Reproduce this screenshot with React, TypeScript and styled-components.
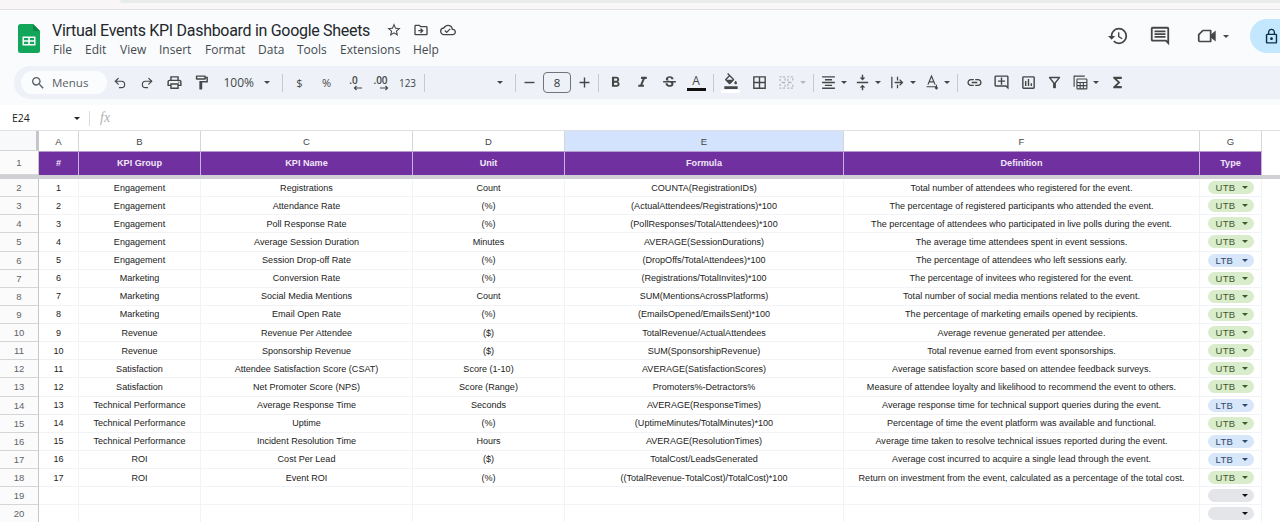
import React from "react";
import styled, { createGlobalStyle } from "styled-components";
import { Undo2, Redo2 } from "lucide-react";
import {
  MdOutlinePrint,
  MdOutlineFormatPaint,
  MdSearch,
  MdFormatBold,
  MdFormatItalic,
  MdStrikethroughS,
  MdBorderAll,
  MdFormatAlignCenter,
  MdVerticalAlignCenter,
  MdLink,
  MdOutlineAddComment,
  MdOutlineInsertChart,
  MdOutlineFilterAlt,
  MdFunctions,
  MdHistory,
  MdOutlineComment,
  MdLockOutline,
  MdStarBorder,
  MdOutlineDriveFileMove,
  MdOutlineCloudDone,
  MdAdd,
  MdRemove,
  MdFormatColorFill,
} from "react-icons/md";

type KpiType = "UTB" | "LTB" | "";

const COLUMNS = [
  { key: "A", width: 40 },
  { key: "B", width: 122 },
  { key: "C", width: 212 },
  { key: "D", width: 152 },
  { key: "E", width: 279 },
  { key: "F", width: 356 },
  { key: "G", width: 62 },
];

const HEADINGS = ["#", "KPI Group", "KPI Name", "Unit", "Formula", "Definition", "Type"];

const KPIS: [string, string, string, string, string, KpiType][] = [
  ["Engagement", "Registrations", "Count", "COUNTA(RegistrationIDs)", "Total number of attendees who registered for the event.", "UTB"],
  ["Engagement", "Attendance Rate", "(%)", "(ActualAttendees/Registrations)*100", "The percentage of registered participants who attended the event.", "UTB"],
  ["Engagement", "Poll Response Rate", "(%)", "(PollResponses/TotalAttendees)*100", "The percentage of attendees who participated in live polls during the event.", "UTB"],
  ["Engagement", "Average Session Duration", "Minutes", "AVERAGE(SessionDurations)", "The average time attendees spent in event sessions.", "UTB"],
  ["Engagement", "Session Drop-off Rate", "(%)", "(DropOffs/TotalAttendees)*100", "The percentage of attendees who left sessions early.", "LTB"],
  ["Marketing", "Conversion Rate", "(%)", "(Registrations/TotalInvites)*100", "The percentage of invitees who registered for the event.", "UTB"],
  ["Marketing", "Social Media Mentions", "Count", "SUM(MentionsAcrossPlatforms)", "Total number of social media mentions related to the event.", "UTB"],
  ["Marketing", "Email Open Rate", "(%)", "(EmailsOpened/EmailsSent)*100", "The percentage of marketing emails opened by recipients.", "UTB"],
  ["Revenue", "Revenue Per Attendee", "($)", "TotalRevenue/ActualAttendees", "Average revenue generated per attendee.", "UTB"],
  ["Revenue", "Sponsorship Revenue", "($)", "SUM(SponsorshipRevenue)", "Total revenue earned from event sponsorships.", "UTB"],
  ["Satisfaction", "Attendee Satisfaction Score (CSAT)", "Score (1-10)", "AVERAGE(SatisfactionScores)", "Average satisfaction score based on attendee feedback surveys.", "UTB"],
  ["Satisfaction", "Net Promoter Score (NPS)", "Score (Range)", "Promoters%-Detractors%", "Measure of attendee loyalty and likelihood to recommend the event to others.", "UTB"],
  ["Technical Performance", "Average Response Time", "Seconds", "AVERAGE(ResponseTimes)", "Average response time for technical support queries during the event.", "LTB"],
  ["Technical Performance", "Uptime", "(%)", "(UptimeMinutes/TotalMinutes)*100", "Percentage of time the event platform was available and functional.", "UTB"],
  ["Technical Performance", "Incident Resolution Time", "Hours", "AVERAGE(ResolutionTimes)", "Average time taken to resolve technical issues reported during the event.", "LTB"],
  ["ROI", "Cost Per Lead", "($)", "TotalCost/LeadsGenerated", "Average cost incurred to acquire a single lead through the event.", "LTB"],
  ["ROI", "Event ROI", "(%)", "((TotalRevenue-TotalCost)/TotalCost)*100", "Return on investment from the event, calculated as a percentage of the total cost.", "UTB"],
];

const MENUS = [
  { label: "File", width: 32 },
  { label: "Edit", width: 35 },
  { label: "View", width: 39 },
  { label: "Insert", width: 46 },
  { label: "Format", width: 53 },
  { label: "Data", width: 39 },
  { label: "Tools", width: 43 },
  { label: "Extensions", width: 73 },
  { label: "Help", width: 32 },
];

const GlobalStyle = createGlobalStyle`
  html, body {
    margin: 0;
    padding: 0;
    height: 522px;
    overflow: hidden;
    background: #fff;
  }
  * { box-sizing: border-box; }
`;

const Page = styled.div`
  width: 1280px;
  height: 522px;
  overflow: hidden;
  display: flex;
  flex-direction: column;
  font-family: "Liberation Sans", Arial, sans-serif;
  background: #f9fbfd;
  > * {
    flex-shrink: 0;
  }
`;

const BrowserEdge = styled.div`
  height: 10px;
  background: #f8f6f6;
  border-bottom: 1px solid #e2dfe2;
`;

const AddressBarEdge = styled.div`
  height: 3px;
  margin-left: 120px;
  background: #e8ecec;
  border-bottom-left-radius: 8px;
`;

const Header = styled.header`
  height: 56px;
  display: flex;
  align-items: flex-start;
  padding-left: 18px;
`;

const Logo = styled.svg`
  width: 22px;
  height: 29px;
  margin-top: 14px;
  flex: none;
`;

const TitleBlock = styled.div`
  margin-left: 12px;
  padding-top: 10px;
  flex: 1;
`;

const TitleRow = styled.div`
  display: flex;
  align-items: center;
  height: 20px;
`;

const Title = styled.div`
  font-family: Roboto, sans-serif;
  font-size: 16px;
  letter-spacing: -0.3px;
  width: 328px;
  white-space: nowrap;
  color: #23272b;
`;

const TitleIcon = styled.span`
  width: 27px;
  display: flex;
  justify-content: center;
  color: #444746;
  font-size: 16px;
`;

const MenuRow = styled.nav`
  display: flex;
  margin-top: 1px;
  margin-left: 1px;
`;

const MenuItem = styled.div<{ $w: number }>`
  width: ${(p) => p.$w}px;
  font-family: "Open Sans", sans-serif;
  font-size: 12px;
  line-height: 17px;
  color: #444a4f;
`;

const HeaderActions = styled.div`
  display: flex;
  align-items: center;
  height: 34px;
  margin-top: 9px;
  color: #444746;
`;

const ActionIcon = styled.span`
  width: 42px;
  display: flex;
  align-items: center;
  justify-content: center;
  font-size: 22px;
`;

const VideoAction = styled.span`
  width: 69px;
  padding-left: 15px;
  display: flex;
  align-items: center;
  gap: 5px;
`;

const LockPill = styled.div`
  width: 30px;
  height: 34px;
  background: #c2e7ff;
  border-radius: 17px 0 0 17px;
  display: flex;
  align-items: center;
  padding-left: 13px;
  font-size: 17px;
  color: #0b2f4a;
`;

const Toolbar = styled.div`
  height: 33px;
  margin-left: 14px;
  padding-left: 7px;
  display: flex;
  align-items: center;
  background: #eef2f8;
  border-radius: 16px 0 0 16px;
  color: #444746;
`;

const SearchPill = styled.div`
  width: 85.5px;
  height: 23px;
  border-radius: 12px;
  background: #fbfcfe;
  display: flex;
  align-items: center;
  gap: 6px;
  padding-left: 9px;
  font-family: "Open Sans", sans-serif;
  font-size: 11.5px;
  color: #5a5f63;
  flex: none;
`;

const Slot = styled.div<{ $w?: number; $dim?: boolean; $gap?: number }>`
  width: ${(p) => p.$w ?? 27}px;
  height: 24px;
  flex: none;
  display: flex;
  align-items: center;
  justify-content: center;
  gap: ${(p) => p.$gap ?? 4}px;
  font-size: 17px;
  color: ${(p) => (p.$dim ? "#b4b8bb" : "#444746")};
`;

const FontFamilySlot = styled(Slot)`
  justify-content: flex-end;
  padding-right: 9px;
`;

const SlotText = styled.span<{ $size?: number }>`
  font-family: "Open Sans", sans-serif;
  font-size: ${(p) => p.$size ?? 11}px;
  color: #444746;
`;

const Separator = styled.div`
  width: 7px;
  height: 18px;
  flex: none;
  display: flex;
  justify-content: center;
  &::before {
    content: "";
    width: 1px;
    background: #c7cbd0;
  }
`;

const Caret = styled.i<{ $dark?: boolean; $dim?: boolean }>`
  width: 0;
  height: 0;
  flex: none;
  border-left: 3.5px solid transparent;
  border-right: 3.5px solid transparent;
  border-top: 3.5px solid ${(p) => (p.$dim ? "#b4b8bb" : p.$dark ? "#222" : "#444746")};
`;

const FontSizeBox = styled.div`
  width: 28px;
  height: 21px;
  flex: none;
  margin: 0 4px;
  border: 1px solid #70757a;
  border-radius: 4px;
  display: flex;
  align-items: center;
  justify-content: center;
  font-family: "Open Sans", sans-serif;
  font-size: 11.5px;
  color: #333;
`;

const ColorStack = styled.div`
  display: flex;
  flex-direction: column;
  align-items: center;
  width: 20px;
`;

const ColorLetter = styled.span`
  font-family: "Open Sans", sans-serif;
  font-size: 12px;
  line-height: 12px;
  color: #444746;
`;

const ColorBar = styled.span<{ $c: string }>`
  width: 19px;
  height: 3px;
  margin-top: 1px;
  background: ${(p) => p.$c};
`;

const FillStack = styled(ColorStack)`
  font-size: 16px;
  line-height: 0;
`;

const DecimalStack = styled.div`
  display: flex;
  flex-direction: column;
  align-items: center;
  font-family: "Open Sans", sans-serif;
  font-size: 10px;
  font-weight: 600;
  line-height: 10px;
  color: #444746;
  svg {
    display: block;
    margin-left: 7px;
  }
`;

const FormulaBar = styled.div`
  height: 25px;
  margin-top: 6px;
  padding: 1px 0 0 12px;
  background: #fff;
  display: flex;
  align-items: center;
`;

const CellRef = styled.div`
  width: 62px;
  font-family: "Open Sans", sans-serif;
  font-size: 10.5px;
  color: #222;
`;

const FormulaDivider = styled.div`
  width: 1px;
  height: 15px;
  margin-left: 9px;
  background: #dadce0;
`;

const FxLabel = styled.span`
  margin-left: 10px;
  font-family: "Liberation Serif", serif;
  font-style: italic;
  font-size: 14px;
  color: #b0b3b6;
`;

const Sheet = styled.section`
  background: #fff;
  border-top: 1px solid #dfe1e4;
`;

const Row = styled.div<{ $h: number }>`
  display: flex;
  height: ${(p) => p.$h}px;
`;

const RowHead = styled.div`
  width: 39px;
  flex: none;
  display: flex;
  align-items: center;
  justify-content: center;
  font-size: 9.5px;
  color: #5f6368;
  background: #fbfbfb;
  border-bottom: 1px solid #d4d6d8;
  border-right: 1px solid #c4c7ca;
`;

const Corner = styled(RowHead)`
  background: #f8f9fa;
  border-right: 3px solid #c4c6c9;
`;

const ColHead = styled.div<{ $w: number; $active?: boolean }>`
  width: ${(p) => p.$w}px;
  flex: none;
  display: flex;
  align-items: center;
  justify-content: center;
  font-size: 9.5px;
  color: #444;
  background: ${(p) => (p.$active ? "#d3e3fd" : "#fff")};
  border-right: 1px solid #d4d6d8;
`;

const HeadCell = styled.div<{ $w: number }>`
  width: ${(p) => p.$w}px;
  flex: none;
  display: flex;
  align-items: center;
  justify-content: center;
  padding-bottom: 2px;
  font-size: 9.1px;
  font-weight: 700;
  color: #f1e6f8;
  background: #7030a0;
  border-right: 1px solid #cdb1e2;
  border-top: 1px solid #b79ad0;
`;

const Cell = styled.div<{ $w: number }>`
  width: ${(p) => p.$w}px;
  flex: none;
  display: flex;
  align-items: center;
  justify-content: center;
  white-space: nowrap;
  font-size: 9.05px;
  color: #222;
  border-right: 1px solid #f1f3f6;
  border-bottom: 1px solid #f1f3f6;
`;

const FreezeBar = styled.div`
  height: 4px;
  background: #cfd0d3;
`;

const CHIP_COLORS: Record<string, { bg: string; fg: string }> = {
  UTB: { bg: "#d9eccb", fg: "#3c5a2c" },
  LTB: { bg: "#d8e6f9", fg: "#2f4a6b" },
  "": { bg: "#e3e5e8", fg: "#222" },
};

const Chip = styled.div<{ $t: KpiType }>`
  width: 46px;
  height: 13px;
  border-radius: 7px;
  display: flex;
  align-items: center;
  justify-content: space-between;
  padding: 0 6px 0 8px;
  font-size: 9.5px;
  letter-spacing: 0.3px;
  background: ${(p) => CHIP_COLORS[p.$t].bg};
  color: ${(p) => CHIP_COLORS[p.$t].fg};
`;

const ChipCaret = styled.i<{ $t: KpiType }>`
  width: 0;
  height: 0;
  margin-left: auto;
  border-left: 3px solid transparent;
  border-right: 3px solid transparent;
  border-top: 3px solid ${(p) => (p.$t === "" ? "#111" : CHIP_COLORS[p.$t].fg)};
`;

const glyph = {
  width: 17,
  height: 17,
  viewBox: "0 0 24 24",
  fill: "none",
  stroke: "currentColor",
  strokeWidth: 1.8,
};

const VideoIcon = () => (
  <svg width="22" height="22" viewBox="0 0 24 24" fill="none" stroke="currentColor" strokeWidth="1.9">
    <path d="M7.5 6H16v12H4a1 1 0 0 1-1-1v-6.5z" strokeLinejoin="round" />
    <path d="M16 10.5 21.5 6v12L16 13.5z" fill="currentColor" stroke="none" />
  </svg>
);

const MergeIcon = () => (
  <svg {...glyph} strokeDasharray="3 2">
    <path d="M3 10V4h7v6M14 10V4h7v6M3 14v6h7v-6M14 14v6h7v-6" />
    <path d="M5 12h5M19 12h-5" strokeDasharray="none" />
  </svg>
);

const WrapIcon = () => (
  <svg {...glyph}>
    <path d="M4 4v16M8 12h11M15 8l4 4-4 4M12 4v5M12 15v5" />
  </svg>
);

const RotateIcon = () => (
  <svg {...glyph} strokeWidth={1.7}>
    <path d="M5 18h14M7 15l5-12 5 12M9 11h6M19 15v6M17 19l2 2 2-2" />
  </svg>
);

const FunctionTableIcon = () => (
  <svg {...glyph} strokeWidth={1.6}>
    <path d="M3 18V3h15" />
    <rect x="7" y="7" width="14" height="14" rx="1" />
    <path d="M7 12h14M7 16.5h14M11.5 12v9M16 12v9" />
  </svg>
);

const ShiftArrow = ({ left }: { left?: boolean }) => (
  <svg width="9" height="6" viewBox="0 0 9 6" fill="none" stroke="currentColor" strokeWidth="1.2">
    {left ? <path d="M9 3H1.5M3.5 1 1.5 3l2 2" /> : <path d="M0 3h7.5M5.5 1l2 2-2 2" />}
  </svg>
);

export default function App() {
  const rows = Array.from({ length: 19 }, (_, i) => KPIS[i] ?? null);

  return (
    <Page>
      <GlobalStyle />
      <BrowserEdge>
        <AddressBarEdge />
      </BrowserEdge>

      <Header>
        <Logo viewBox="0 0 22 29">
          <path d="M2.5 0H15l7 7v19.5a2.5 2.5 0 0 1-2.5 2.5h-17A2.5 2.5 0 0 1 0 26.5v-24A2.5 2.5 0 0 1 2.5 0z" fill="#11a65a" />
          <path d="M15 0l7 7h-5a2 2 0 0 1-2-2z" fill="#0c8445" />
          <path d="M4.5 12.5h13v9h-13z M6 14v2.3h4.2V14z M11.8 14v2.3H16V14z M6 17.8v2.2h4.2v-2.2z M11.8 17.8v2.2H16v-2.2z" fill="#fff" fillRule="evenodd" />
        </Logo>
        <TitleBlock>
          <TitleRow>
            <Title>Virtual Events KPI Dashboard in Google Sheets</Title>
            <TitleIcon><MdStarBorder /></TitleIcon>
            <TitleIcon><MdOutlineDriveFileMove /></TitleIcon>
            <TitleIcon><MdOutlineCloudDone /></TitleIcon>
          </TitleRow>
          <MenuRow>
            {MENUS.map((m) => (
              <MenuItem key={m.label} $w={m.width}>{m.label}</MenuItem>
            ))}
          </MenuRow>
        </TitleBlock>
        <HeaderActions>
          <ActionIcon><MdHistory /></ActionIcon>
          <ActionIcon><MdOutlineComment /></ActionIcon>
          <VideoAction><VideoIcon /><Caret /></VideoAction>
          <LockPill><MdLockOutline /></LockPill>
        </HeaderActions>
      </Header>

      <Toolbar>
        <SearchPill><MdSearch size={16} />Menus</SearchPill>
        <Slot><Undo2 size={14} strokeWidth={2} /></Slot>
        <Slot><Redo2 size={14} strokeWidth={2} /></Slot>
        <Slot><MdOutlinePrint /></Slot>
        <Slot><MdOutlineFormatPaint /></Slot>
        <Slot $w={64.5} $gap={10}><SlotText $size={12}>100%</SlotText><Caret /></Slot>
        <Separator />
        <Slot><SlotText>$</SlotText></Slot>
        <Slot><SlotText>%</SlotText></Slot>
        <Slot><DecimalStack>.0<ShiftArrow left /></DecimalStack></Slot>
        <Slot><DecimalStack>.00<ShiftArrow /></DecimalStack></Slot>
        <Slot><SlotText $size={10}>123</SlotText></Slot>
        <Separator />
        <FontFamilySlot $w={84}><Caret /></FontFamilySlot>
        <Separator />
        <Slot $w={20}><MdRemove /></Slot>
        <FontSizeBox>8</FontSizeBox>
        <Slot $w={19.5}><MdAdd /></Slot>
        <Separator />
        <Slot><MdFormatBold /></Slot>
        <Slot><MdFormatItalic /></Slot>
        <Slot><MdStrikethroughS /></Slot>
        <Slot><ColorStack><ColorLetter>A</ColorLetter><ColorBar $c="#111" /></ColorStack></Slot>
        <Separator />
        <Slot $w={28}><FillStack><MdFormatColorFill /><ColorBar $c="#fff" /></FillStack></Slot>
        <Slot $w={29}><MdBorderAll /></Slot>
        <Slot $w={36.5} $dim $gap={5}><MergeIcon /><Caret $dim /></Slot>
        <Separator />
        <Slot $w={33.5}><MdFormatAlignCenter /><Caret /></Slot>
        <Slot $w={34}><MdVerticalAlignCenter /><Caret /></Slot>
        <Slot $w={35}><WrapIcon /><Caret /></Slot>
        <Slot $w={34.5}><RotateIcon /><Caret /></Slot>
        <Separator />
        <Slot><MdLink /></Slot>
        <Slot $w={26.5}><MdOutlineAddComment /></Slot>
        <Slot><MdOutlineInsertChart /></Slot>
        <Slot $w={26}><MdOutlineFilterAlt /></Slot>
        <Slot $w={36}><FunctionTableIcon /><Caret /></Slot>
        <Slot><MdFunctions /></Slot>
      </Toolbar>

      <FormulaBar>
        <CellRef>E24</CellRef>
        <Caret $dark />
        <FormulaDivider />
        <FxLabel>fx</FxLabel>
      </FormulaBar>

      <Sheet>
        <Row $h={20}>
          <Corner />
          {COLUMNS.map((c) => (
            <ColHead key={c.key} $w={c.width} $active={c.key === "E"}>{c.key}</ColHead>
          ))}
        </Row>
        <Row $h={24}>
          <RowHead>1</RowHead>
          {COLUMNS.map((c, i) => (
            <HeadCell key={c.key} $w={c.width}>{HEADINGS[i]}</HeadCell>
          ))}
        </Row>
        <FreezeBar />
        {rows.map((kpi, i) => (
          <Row $h={18.125} key={i}>
            <RowHead>{i + 2}</RowHead>
            <Cell $w={COLUMNS[0].width}>{kpi ? i + 1 : ""}</Cell>
            {[1, 2, 3, 4, 5].map((col) => (
              <Cell key={col} $w={COLUMNS[col].width}>{kpi ? kpi[col - 1] : ""}</Cell>
            ))}
            <Cell $w={COLUMNS[6].width}>
              <Chip $t={kpi ? kpi[5] : ""}>
                {kpi ? kpi[5] : ""}
                <ChipCaret $t={kpi ? kpi[5] : ""} />
              </Chip>
            </Cell>
          </Row>
        ))}
      </Sheet>
    </Page>
  );
}
